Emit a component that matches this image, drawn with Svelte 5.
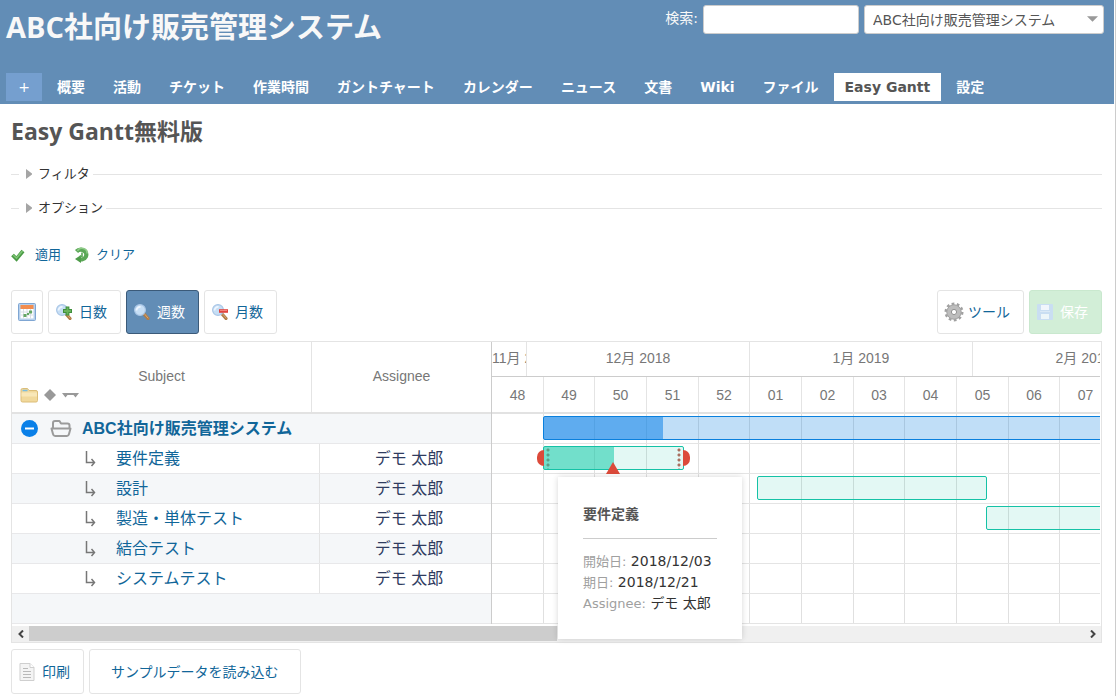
<script lang="ts">
  type Task = { name: string; assignee: string; start?: number; end?: number; done?: number };

  const menu = [
    '概要', '活動', 'チケット', '作業時間', 'ガントチャート', 'カレンダー', 'ニュース',
    '文書', 'Wiki', 'ファイル', 'Easy Gantt', '設定'
  ];
  const current = 'Easy Gantt';
  const project = 'ABC社向け販売管理システム';

  // days are counted from Monday of week 48
  const weekWidth = 155 / 3;
  const x = (day: number) => Math.round((day * weekWidth) / 7);

  const weeks = ['48', '49', '50', '51', '52', '01', '02', '03', '04', '05', '06', '07'];
  const months = [
    { label: '11月 2018', width: 35 },
    { label: '12月 2018', width: 223 },
    { label: '1月 2019', width: 223 },
    { label: '2月 2019', width: 223 }
  ];

  const tasks: Task[] = [
    { name: '要件定義', assignee: 'デモ 太郎', start: 7, end: 26, done: 50 },
    { name: '設計', assignee: 'デモ 太郎', start: 36, end: 67 },
    { name: '製造・単体テスト', assignee: 'デモ 太郎', start: 67, end: 95 },
    { name: '結合テスト', assignee: 'デモ 太郎' },
    { name: 'システムテスト', assignee: 'デモ 太郎' }
  ];

  let query = $state('');
  let zoom = $state('週数');
</script>

{#snippet lens(sign: string)}
  <svg class="icon" viewBox="0 0 16 16" aria-hidden="true">
    <path d="M10.500 10.500l3.500 4" stroke="#b07c45" stroke-width="3.200" stroke-linecap="round" />
    <path d="M11 10.500l3 3.500" stroke="#d6a877" stroke-width="1" stroke-linecap="round" />
    <circle cx="6" cy="6" r="5.400" fill="#c6def5" stroke="#a9c6e6" stroke-width="1.200" />
    <path d="M2.500 6.500a3.500 3.500 0 0 1 4-3.500" fill="none" stroke="#eef6ff" stroke-width="1.800" />
    {#if sign === '+'}
      <path d="M11.500 2.500v9M7 7h9" stroke="#3f8f3c" stroke-width="3.800" />
      <path d="M11.500 3.500v7M8 7h7" stroke="#69b35c" stroke-width="1.800" />
    {:else if sign === '-'}
      <path d="M7 7h9" stroke="#e2443e" stroke-width="3.600" />
      <path d="M8 6.500h7" stroke="#f3857c" stroke-width="1" />
    {/if}
  </svg>
{/snippet}

<div class="page">
  <header>
    <div class="top">
      <h1>{project}</h1>
      <form class="quick">
        <label for="q">検索:</label>
        <input id="q" type="text" bind:value={query} />
        <div class="jump">
          <select aria-label="プロジェクト">
            <option>{project}</option>
          </select>
          <svg viewBox="0 0 12 6" aria-hidden="true"><path d="M0 0h12L6 6z" fill="#999" /></svg>
        </div>
      </form>
    </div>
    <nav>
      <button class="add" type="button">+</button>
      {#each menu as item}
        <a href="#{item}" class:selected={item === current}>{item}</a>
      {/each}
    </nav>
  </header>

  <main>
    <h2>Easy Gantt無料版</h2>

    {#each ['フィルタ', 'オプション'] as title}
      <fieldset>
        <legend>
          <button type="button">
            <svg viewBox="0 0 6 10" aria-hidden="true"><path d="M0 0l6 4.5v1L0 10z" fill="#a5a5a5" /></svg>
            {title}
          </button>
        </legend>
      </fieldset>
    {/each}

    <p class="actions">
      <a href="#apply">
        <svg class="icon" viewBox="0 0 16 16" aria-hidden="true">
          <path d="M1.500 8l4 4 6.500-8" fill="none" stroke="#4a9a45" stroke-width="3.800" />
          <path d="M2 8l3.500 3 6-7" fill="none" stroke="#7cc373" stroke-width="1.600" />
        </svg>
        適用
      </a>
      <a href="#clear" class="clear">
        <svg class="icon" viewBox="0 0 16 16" aria-hidden="true">
          <path d="M2.500 4.500a5.500 5 0 1 1 5.500 8H5" fill="none" stroke="#5ba757" stroke-width="4.200" />
          <path d="M7 8v8L1 12z" fill="#4f9c4b" />
          <path d="M8 5.500v4H5.500" fill="none" stroke="#5ba757" stroke-width="1.600" />
          <path d="M3.500 4a5 4.500 0 0 1 9.500 2.500" fill="none" stroke="#8fcb88" stroke-width="1.600" />
        </svg>
        クリア
      </a>
    </p>

    <div class="toolbar">
      <button type="button" class="square" aria-label="今日">
        <svg class="cal" viewBox="0 0 18 18" aria-hidden="true">
          <rect x="0.500" y="0.500" width="17" height="17" rx="1" fill="#b7d0ec" stroke="#7fa6d3" />
          <rect x="2.500" y="2" width="13" height="4" fill="#f28d4f" />
          <rect x="2.500" y="6" width="13" height="9.500" fill="#fff" />
          <path d="M2.500 9h13M2.500 12h13M5.500 6v9.500M9 6v9.500M12.500 6v9.500" stroke="#d9dee6" />
          <path d="M11 7.500h3v3h-3zM5.500 11h3v3h-3zM9 10h2v2H9z" fill="#65a765" />
        </svg>
      </button>
      {#each [['日数', '+'], ['週数', ''], ['月数', '-']] as [label, sign]}
        <button type="button" class:active={zoom === label} onclick={() => (zoom = label)}>
          {@render lens(sign)}{label}
        </button>
      {/each}
      <button type="button" class="tools">
        <svg class="gear" viewBox="0 0 20 20" aria-hidden="true">
          <circle cx="10" cy="10" r="8" fill="none" stroke="#a0a0a0" stroke-width="3" stroke-dasharray="2.600 2.426" />
          <circle cx="10" cy="10" r="5" fill="none" stroke="#bdbdbd" stroke-width="5" />
          <circle cx="10" cy="10" r="7.200" fill="none" stroke="#9c9c9c" stroke-width="0.800" />
          <circle cx="10" cy="10" r="2.600" fill="#fff" stroke="#909090" />
        </svg>
        ツール
      </button>
      <button type="button" class="save" disabled>
        <svg class="icon" viewBox="0 0 16 16" aria-hidden="true">
          <rect width="16" height="16" rx="1" fill="#c9def2" />
          <rect x="4" y="1" width="8" height="5" fill="#f1f6fc" />
          <rect x="4" y="10" width="8" height="5" fill="#edf6f9" />
          <rect x="3" y="7" width="10" height="1" fill="#dae9f6" />
        </svg>
        保存
      </button>
    </div>

    <section class="gantt">
      <div class="panes">
        <table>
          <thead>
            <tr>
              <th>
                Subject
                <span class="marks">
                  <svg class="folder" viewBox="0 0 18 16" aria-hidden="true">
                    <path d="M1 3q0-1.500 1.500-1.500h5l1.500 2h7q1.500 0 1.500 1.500v8.500q0 1.500-1.500 1.500h-13.500q-1.500 0-1.500-1.500z" fill="#f1d99c" stroke="#dcbd78" />
                    <path d="M2.500 3.500h5" stroke="#79bde0" stroke-width="1.500" />
                    <path d="M1.500 5.500h15.500v4H1.500z" fill="#f8e7b8" />
                  </svg>
                  <svg class="diamond" viewBox="0 0 12 12" aria-hidden="true"><path d="M6 0l6 6-6 6-6-6z" fill="#999" /></svg>
                  <svg class="span" viewBox="0 0 17 6" aria-hidden="true"><path d="M0 1h17l-3.500 4.500L11.500 3h-6L3.500 5.500z" fill="#999" /></svg>
                </span>
              </th>
              <th>Assignee</th>
            </tr>
          </thead>
          <tbody>
            <tr class="project">
              <td colspan="2">
                <button type="button" class="fold" aria-label="折りたたむ">
                  <svg viewBox="0 0 17 17" aria-hidden="true">
                    <circle cx="8.500" cy="8.500" r="8.500" fill="#0a80e8" />
                    <path d="M4 8.500h9" stroke="#fff" stroke-width="2" />
                  </svg>
                </button>
                <svg class="open" viewBox="0 0 22 17" aria-hidden="true">
                  <path d="M3 9V3q0-2 2-2h4.500l1.500 2.500h6.500q2 0 2 2V9M1.500 8.500h19l-1.500 5.500q-.5 2-2 2H5q-1.500 0-2-2z" fill="none" stroke="#9b9b9b" stroke-width="2" stroke-linejoin="round" />
                </svg>
                <a href="#project">{project}</a>
              </td>
            </tr>
            {#each tasks as task}
              <tr>
                <td>
                  <svg class="branch" viewBox="0 0 11 16" aria-hidden="true">
                    <path d="M1.500 0v11.500h8M6.500 8l3 3.500-3 3.500" fill="none" stroke="#777" stroke-width="1.500" />
                  </svg>
                  <a href="#{task.name}">{task.name}</a>
                </td>
                <td>{task.assignee}</td>
              </tr>
            {/each}
            <tr class="empty"><td colspan="2"></td></tr>
          </tbody>
        </table>

        <div class="chart">
          <div class="scale months">
            {#each months as month}
              <span style:width="{month.width}px">{month.label}</span>
            {/each}
          </div>
          <div class="scale weeks">
            {#each weeks as week, i}
              <span style:width="{x(i * 7 + 7) - x(i * 7)}px">{week}</span>
            {/each}
          </div>
          <div class="body">
            <div class="lines">
              {#each weeks as _, i}
                <i style:width="{x(i * 7 + 7) - x(i * 7)}px"></i>
              {/each}
            </div>
            <div class="rows">
              <div class="row">
                <div class="bar parent" style:margin-left="{x(7) - 1}px" style:width="{x(95) - x(7)}px">
                  <div class="done" style:width="{x(23.2) - x(7)}px"></div>
                </div>
              </div>
              {#each tasks as task, i}
                <div class="row">
                  {#if task.start && task.end}
                    <div
                      class="bar"
                      class:hover={i === 0}
                      style:margin-left="{x(task.start) - 1}px"
                      style:width="{x(task.end) - x(task.start) + 1}px"
                    >
                      {#if task.done}
                        <div class="done" style:width="{task.done}%"></div>
                        <svg class="now" style:left="{task.done}%" viewBox="0 0 14 12" aria-hidden="true">
                          <path d="M7 0l7 12H0z" fill="#dc4a3a" />
                        </svg>
                      {/if}
                    </div>
                  {/if}
                </div>
              {/each}
              <div class="row"></div>
            </div>
          </div>
          <div class="tip" style:left="{x(9)}px">
            <h3>要件定義</h3>
            <dl>
              <div><dt>開始日:</dt> <dd>2018/12/03</dd></div>
              <div><dt>期日:</dt> <dd>2018/12/21</dd></div>
              <div><dt>Assignee:</dt> <dd>デモ 太郎</dd></div>
            </dl>
          </div>
        </div>
      </div>
      <div class="scrollbar">
        <button type="button" aria-label="左へ">
          <svg viewBox="0 0 6 8" aria-hidden="true"><path d="M5 0.500L1.500 4 5 7.500" /></svg>
        </button>
        <div class="track"><div class="thumb"></div></div>
        <button type="button" aria-label="右へ">
          <svg viewBox="0 0 6 8" aria-hidden="true"><path d="M1 0.500L4.500 4 1 7.500" /></svg>
        </button>
      </div>
    </section>

    <div class="toolbar bottom">
      <button type="button">
        <svg class="doc" viewBox="0 0 16 18" aria-hidden="true">
          <path d="M1 0.500h10l4 4v13H1z" fill="#f4f4f4" stroke="#cfcfcf" />
          <path d="M11 0.500v4h4" fill="#fff" stroke="#cfcfcf" />
          <path d="M4 5.500h5M4 8.500h8M4 11.500h8M4 14.500h8" stroke="#b9b9b9" />
        </svg>
        印刷
      </button>
      <button type="button" class="sample">サンプルデータを読み込む</button>
    </div>
  </main>
</div>

<style>
  :global(body) {
    background: #fff;
    color: #333;
    font: 14px/20px 'DejaVu Sans', 'Noto Sans CJK JP', sans-serif;
  }

  .page {
    box-sizing: border-box;
    min-height: 100vh;
    padding-right: 1px;
    border-right: 1px solid #ccc;
    overflow: hidden;
  }

  * {
    box-sizing: border-box;
  }

  button,
  input,
  select {
    font: inherit;
    color: inherit;
  }

  button {
    padding: 0;
    border: 0;
    background: none;
    cursor: pointer;
  }

  a {
    color: #169;
    text-decoration: none;
  }

  svg {
    display: block;
    flex: none;
  }

  .icon {
    width: 16px;
    height: 16px;
  }

  header {
    padding: 5px 10px 3px 6px;
    background: #628db6;
    color: #f8f8f8;
  }

  .top {
    display: flex;
    justify-content: space-between;
    align-items: flex-start;
    height: 68px;
  }

  h1 {
    margin: 0;
    font: bold 29px/44px 'Open Sans', 'Noto Sans CJK JP', sans-serif;
    white-space: nowrap;
  }

  .quick {
    display: flex;
    gap: 5px;
  }

  .quick label {
    line-height: 26px;
  }

  .quick input,
  .quick select {
    height: 29px;
    border: 1px solid #ccc;
    border-radius: 3px;
    background: #fff;
    color: #555;
  }

  .quick input {
    width: 156px;
    padding: 0 8px;
  }

  .jump {
    position: relative;
    width: 240px;
  }

  .jump select {
    width: 100%;
    padding: 0 20px 0 8px;
    appearance: none;
  }

  .jump svg {
    position: absolute;
    top: 11px;
    right: 6px;
    width: 11px;
    height: 6px;
    pointer-events: none;
  }

  nav {
    display: flex;
    gap: 2px;
    font-weight: bold;
    line-height: 28px;
    white-space: nowrap;
  }

  nav a {
    padding: 0 13px;
    color: #fff;
  }

  nav .selected {
    padding: 0 11px;
    background: #fff;
    color: #555;
  }

  .add {
    width: 36px;
    background: #759fcf;
    color: #fff;
    font-weight: normal;
  }

  main {
    padding: 12px 12px 0 11px;
  }

  h2 {
    margin: 0 0 18px;
    color: #555;
    font: bold 23px/30px 'Open Sans', 'Noto Sans CJK JP', sans-serif;
  }

  fieldset {
    margin: 0 0 14px;
    padding: 0 0 0 8px;
    border: 0;
    border-top: 1px solid #e4e4e4;
    font-size: 13px;
  }

  legend {
    height: 20px;
    padding: 0 3px 0 7px;
  }

  legend button {
    display: flex;
    align-items: center;
    gap: 6px;
    line-height: 20px;
  }

  legend svg {
    width: 6px;
    height: 10px;
  }

  .actions {
    display: flex;
    gap: 13px;
    margin: 27px 0 25px;
    font-size: 13px;
  }

  .actions a {
    display: flex;
    align-items: center;
    gap: 8px;
  }

  .actions .clear {
    gap: 6px;
  }

  .toolbar {
    display: flex;
    gap: 5px;
    margin-bottom: 7px;
  }

  .toolbar button {
    display: flex;
    align-items: center;
    gap: 7px;
    height: 44px;
    padding: 0 13px 0 7px;
    border: 1px solid #e4e4e4;
    border-radius: 3px;
    color: #169;
    white-space: nowrap;
  }

  .toolbar .square {
    padding: 0 6px;
  }

  .cal {
    width: 18px;
    height: 18px;
  }

  .toolbar .active {
    border-color: #3b5a79;
    background: #628db6;
    color: #fff;
  }

  .toolbar .tools {
    gap: 4px;
    margin-left: auto;
    padding-left: 6px;
  }

  .gear {
    width: 20px;
    height: 20px;
  }

  .toolbar .save {
    border-color: #c9e8ce;
    background: #d2eed7;
    color: #fff;
  }

  .doc {
    width: 16px;
    height: 18px;
  }

  .toolbar.bottom {
    margin: 6px 0 0;
  }

  .bottom button {
    height: 45px;
  }

  .toolbar .sample {
    padding: 0 21px;
  }

  .gantt {
    border: 1px solid #e4e4e4;
  }

  .panes {
    display: flex;
    height: 284px;
    padding-right: 1px;
  }

  table {
    flex: none;
    display: block;
    width: 480px;
    height: 282px;
    border-right: 1px solid #ccc;
    font: 16px/29px 'Liberation Sans', 'Noto Sans CJK JP', sans-serif;
  }

  thead,
  tbody {
    display: block;
  }

  tr {
    display: grid;
    grid-template-columns: 308px 1fr;
    height: 30px;
    border-bottom: 1px solid #e8e8ea;
  }

  tbody tr:nth-child(odd) {
    background: #f5f7f9;
  }

  thead tr {
    grid-template-columns: 300px 1fr;
    height: 72px;
    border-bottom: 2px solid #e2e2e2;
  }

  th {
    position: relative;
    padding: 0;
    color: #777;
    font-size: 14px;
    font-weight: normal;
    line-height: 68px;
  }

  th:first-child,
  td:first-child {
    border-right: 1px solid #e4e4e4;
  }

  .marks {
    position: absolute;
    bottom: 9px;
    left: 8px;
    display: flex;
    align-items: center;
    gap: 6px;
  }

  .folder {
    width: 18px;
    height: 16px;
  }

  .diamond {
    width: 12px;
    height: 12px;
  }

  .span {
    width: 17px;
    height: 6px;
  }

  td {
    padding: 0 0 0 7px;
    color: #2f3c5f;
    text-align: center;
    white-space: nowrap;
  }

  td:first-child {
    display: flex;
    align-items: center;
    gap: 20px;
    padding-left: 73px;
  }

  .project td:first-child,
  .empty td:first-child {
    grid-column: 1 / -1;
    gap: 10px;
    padding-left: 9px;
    border: 0;
  }

  .project a {
    font-weight: bold;
  }

  .fold svg {
    width: 17px;
    height: 17px;
  }

  .open {
    width: 22px;
    height: 17px;
    margin-left: 2px;
  }

  .branch {
    width: 11px;
    height: 16px;
  }

  .chart {
    position: relative;
    flex: 1;
    min-width: 0;
  }

  .scale,
  .body {
    overflow: hidden;
  }

  .scale {
    display: flex;
    height: 35px;
    border-bottom: 1px solid #ccc;
    color: #777;
    font: 14px/33px 'Liberation Sans', 'Noto Sans CJK JP', sans-serif;
    text-align: center;
    white-space: nowrap;
  }

  .scale span {
    flex: none;
    overflow: hidden;
    border-right: 1px solid #e4e4e4;
  }

  .weeks {
    height: 37px;
    border-bottom: 2px solid #e2e2e2;
    line-height: 36px;
  }

  .body {
    display: grid;
  }

  .lines,
  .rows {
    grid-area: 1 / 1;
    min-width: 0;
  }

  .lines {
    display: flex;
  }

  .lines i {
    flex: none;
    border-right: 1px solid #e0e0e0;
  }

  .row {
    height: 30px;
    padding-top: 2px;
    border-bottom: 1px solid #e4e4e4;
  }

  .bar {
    position: relative;
    height: 24px;
    border: 1px solid #15c2a6;
    border-radius: 2px;
    background: rgb(21 194 166 / 12%);
  }

  .done {
    height: 100%;
    background: rgb(21 203 170 / 55%);
  }

  .parent {
    border-color: #0a80dd;
    background: rgb(10 128 224 / 26%);
  }

  .parent .done {
    background: rgb(10 128 232 / 53%);
  }

  .hover::before,
  .hover::after {
    content: '';
    position: absolute;
    top: 3px;
    width: 7px;
    height: 16px;
    background: #dc4a3a;
  }

  .hover::before {
    right: 100%;
    border-radius: 8px 0 0 8px;
  }

  .hover::after {
    left: 100%;
    border-radius: 0 8px 8px 0;
  }

  .hover {
    background:
      radial-gradient(circle at 4px 3px, #a8705f 1px, transparent 2px) left top / 8px 5px repeat-y,
      radial-gradient(circle at 4px 3px, #a8705f 1px, transparent 2px) right top / 8px 5px repeat-y,
      rgb(21 194 166 / 12%);
  }

  .now {
    position: absolute;
    bottom: -5px;
    width: 14px;
    height: 12px;
    margin-left: -8px;
  }

  .tip {
    position: absolute;
    top: 135px;
    z-index: 1;
    min-width: 184px;
    padding: 25px;
    background: #fff;
    box-shadow: 0 0 6px rgb(0 0 0 / 16%);
    white-space: nowrap;
  }

  h3 {
    margin: 0;
    padding: 2px 0 14px;
    border-bottom: 1px solid #ccc;
    color: #555;
    font-size: 14px;
    line-height: 20px;
  }

  dl {
    margin: 12px 0 0;
    font-size: 14px;
    line-height: 21px;
  }

  dt,
  dd {
    display: inline;
    margin: 0;
  }

  dt {
    color: #a0a0a0;
    font-size: 13px;
  }

  .scrollbar {
    display: flex;
    height: 16px;
    background: #f0f0f0;
  }

  .scrollbar button {
    display: grid;
    place-items: center;
    width: 17px;
  }

  .scrollbar svg {
    width: 6px;
    height: 8px;
    fill: none;
    stroke: #444;
    stroke-width: 2;
  }

  .track {
    flex: 1;
  }

  .thumb {
    width: 50%;
    height: 15px;
    background: #cdcdcd;
  }
</style>
